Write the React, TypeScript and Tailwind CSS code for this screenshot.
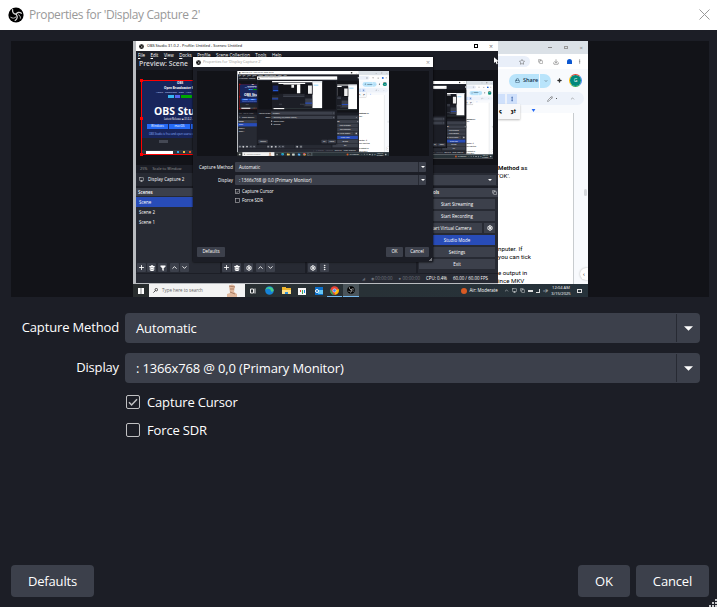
import React from "react";
import {
  Plus, Trash2, Filter, ChevronUp, ChevronDown, Settings, MoreVertical, Monitor,
  Download, Star, Pencil, Sparkle, Lock, Copy,
} from "lucide-react";

function ObsLogo({ className }: { className: string }) {
  return (
    <svg viewBox="0 0 16 16" className={className}>
      <circle cx="8" cy="8" r="7.6" fill="#000" />
      <g fill="none" stroke="#d6d6d6" strokeWidth="1.3" strokeLinecap="round">
        <path d="M4.6 2.7C4.2 5.2 5.6 7 8.1 7.2" />
        <path d="M13.4 6.2C11.2 4.8 9 5.4 8.1 7.2" />
        <path d="M7.2 13.4C9.4 12.2 9.9 9.6 8.1 7.2" />
        <path d="M2.8 10.4C4.6 11.6 6.6 11.4 7.9 10" strokeWidth="0.9" />
        <path d="M12.4 11.2C12.6 9.6 11.8 8.4 10.6 7.8" strokeWidth="0.9" />
      </g>
    </svg>
  );
}

function Arrow({ className }: { className: string }) {
  return (
    <svg viewBox="0 0 10 5" className={className}>
      <path d="M0 0H10L5 5Z" fill="#fff" />
    </svg>
  );
}

function Grip({ className }: { className: string }) {
  return (
    <svg viewBox="0 0 9 9" className={className} fill="#c9cacc">
      <path d="M7 1h2v2H7zM4 4h2v2H4zM7 4h2v2H7zM1 7h2v2H1zM4 7h2v2H4zM7 7h2v2H7z" />
    </svg>
  );
}

function MiniBox({ children, className = "" }: { children?: React.ReactNode; className?: string }) {
  return (
    <span className={`flex h-[9px] w-[9px] shrink-0 items-center justify-center rounded-[1px] bg-[#3c404b] text-white ${className}`}>
      {children}
    </span>
  );
}

function MiniCombo({ label }: { label: string }) {
  return (
    <div className="flex h-[10px] w-[191px] items-center rounded-[1px] bg-[#3c404b] pl-[4px]">
      <span className="flex-1">{label}</span>
      <span className="flex h-full w-[8px] items-center justify-center border-l-[0.5px] border-[#272a33]">
        <Arrow className="h-[2px] w-[4px]" />
      </span>
    </div>
  );
}

/* Smallest level of the mirrored desktop: only blocks of colour are legible. */
function Thumbnail() {
  return (
    <svg viewBox="0 0 455 256" preserveAspectRatio="none" className="h-full w-full">
      <path d="M0 0H455V256H0Z" fill="#1c1e26" />
      <path d="M365 0H455V243H365Z" fill="#fff" />
      <path d="M365 0H455V13H365Z" fill="#dbe1e7" />
      <path d="M376 32H418V46H376Z" fill="#b9e4fb" />
      <path d="M3 0H365V10H3Z" fill="#fff" />
      <path d="M3 29H365V124H3Z" fill="#121318" />
      <path d="M8 40H60V96H8Z" fill="#18255c" />
      <path d="M12 81H60V88H12Z" fill="#2469f5" />
      <path d="M3 147H60V156H3ZM286 158H362V228H286Z" fill="#3c404b" />
      <path d="M3 156H60V166H3ZM286 194H362V204H286Z" fill="#284cb8" />
      <path d="M60 16H300V221H60Z" fill="#1c1e26" />
      <path d="M60 16H300V26H60Z" fill="#fff" />
      <path d="M64 30H296V115H64Z" fill="#121318" />
      <path d="M104 30H225V34H104ZM226 30H256V111H226Z" fill="#fff" />
      <path d="M176 34H200V60H176ZM325 40H360V114H325Z" fill="#eee" />
      <path d="M102 121H293V131H102ZM102 134H293V144H102ZM64 205H92V215H64ZM253 205H270V215H253ZM272 205H296V215H272Z" fill="#3c404b" />
      <path d="M0 243H455V256H0Z" fill="#2b3236" />
      <path d="M16 243H112V256H16Z" fill="#f3f3f3" />
    </svg>
  );
}

function MirrorInDialog({ depth }: { depth: number }) {
  if (depth <= 0) return <Thumbnail />;
  return (
    <div className="h-[256px] w-[455px] origin-top-left scale-[0.334]">
      <Desktop depth={depth - 1} />
    </div>
  );
}

function MirrorInProgram({ depth }: { depth: number }) {
  if (depth <= 0) return <Thumbnail />;
  return (
    <div className="h-[256px] w-[455px] origin-top-left scale-[0.302]">
      <Desktop depth={depth - 1} />
    </div>
  );
}

function MiniDialog({ depth }: { depth: number }) {
  return (
    <div className="absolute left-[60px] top-[16px] flex h-[205px] w-[240px] flex-col bg-[#1c1e26] text-[4.45px] shadow-[0_0_2px_#000]">
      <div className="flex h-[10px] items-center gap-[2px] bg-white px-[3px] text-[3.8px] text-[#999]">
        <ObsLogo className="h-[5px] w-[5px]" />
        <span className="flex-1">Properties for 'Display Capture 2'</span>
        <span className="text-[7px] leading-none">×</span>
      </div>
      <div className="mx-[4px] mt-[4px] h-[85px] overflow-hidden bg-[#121318] pl-[40px]">
        <div className="h-[85px] w-[152px] overflow-hidden">
          <MirrorInDialog depth={depth} />
        </div>
      </div>
      <div className="mt-[6px] flex flex-col gap-[3px]">
        <div className="flex items-center gap-[2px]">
          <span className="w-[40px] text-right">Capture Method</span>
          <MiniCombo label="Automatic" />
        </div>
        <div className="flex items-center gap-[2px]">
          <span className="w-[40px] text-right">Display</span>
          <MiniCombo label=": 1366x768 @ 0,0 (Primary Monitor)" />
        </div>
      </div>
      <div className="ml-[42px] mt-[3px] flex flex-col gap-[3px]">
        <span className="flex h-[6.5px] items-center gap-[2px]">
          <svg viewBox="0 0 14 14" className="h-[5px] w-[5px]" fill="none" stroke="#c1c1c3" strokeWidth="1.6">
            <rect x="1" y="1" width="12" height="12" /><path d="M3 7.3L5.6 10L11 4.2" />
          </svg>
          Capture Cursor
        </span>
        <span className="flex h-[6.5px] items-center gap-[2px]">
          <svg viewBox="0 0 14 14" className="h-[5px] w-[5px]" fill="none" stroke="#c1c1c3" strokeWidth="1.6">
            <rect x="1" y="1" width="12" height="12" />
          </svg>
          Force SDR
        </span>
      </div>
      <div className="mt-auto flex gap-[2px] px-[4px] pb-[5.5px]">
        <span className="flex h-[10px] w-[28px] items-center justify-center rounded-[1px] bg-[#3c404b]">Defaults</span>
        <span className="ml-auto flex h-[10px] w-[17px] items-center justify-center rounded-[1px] bg-[#3c404b]">OK</span>
        <span className="flex h-[10px] w-[24px] items-center justify-center rounded-[1px] bg-[#3c404b]">Cancel</span>
      </div>
      <Grip className="absolute bottom-px right-px h-[3px] w-[3px]" />
    </div>
  );
}

function ScenePreview() {
  return (
    <div className="absolute left-[5px] top-[10px] h-[75px] w-[133px] border border-[#ff0000] bg-[#1c1e26]">
      <div className="flex h-[57px] flex-col items-start whitespace-nowrap bg-[#18255c] pt-px text-white">
        <span className="pl-[35px] text-[3px] font-bold leading-[3.5px]">OBS</span>
        <span className="pl-[22px] text-[3px] font-bold leading-[4px]">Open Broadcaster Software</span>
        <span className="pl-[14px] text-[2.5px] leading-[4px] text-[#c5d5ff]">Home &nbsp; Download &nbsp; Blog &nbsp; Help &nbsp; Forum</span>
        <span className="mt-px flex h-[3px] gap-px pl-[26px]">
          <i className="w-[6px] bg-[#35b7f3]" /><i className="w-[5px] bg-[#5865f2]" /><i className="w-[11px] bg-[#00a800]" />
        </span>
        <span className="mt-[6px] pl-[12px] text-[10.4px] font-bold leading-[14px]">OBS Studio</span>
        <span className="pl-[22px] text-[2.6px] leading-[3px]">Latest Release ■ 31.0.2 - March</span>
        <span className="mt-[3px] flex gap-px pl-[5px] text-[3px] leading-[5px]">
          <span className="w-[21px] bg-[#2469f5] text-center">Windows</span>
          <span className="w-[21px] bg-[#2469f5] text-center">macOS</span>
          <span className="w-[21px] bg-[#2469f5] text-center">Linux</span>
        </span>
        <span className="mt-[4px] pl-[7px] text-[2.6px] leading-[3px] text-[#8eb4ff]">OBS Studio is free and open source software</span>
      </div>
      <div className="flex h-[12px] items-start bg-[#20232c] px-[17px] pt-[2px]">
        <i className="h-[3px] w-[9px] bg-[#444854]" />
      </div>
      <div className="flex h-[4px] items-center gap-[4px] bg-[#30343b] pl-[4px]">
        <i className="h-[3px] w-[27px] bg-white" /><i className="h-[2px] w-[2px] bg-[#39a6e5]" /><i className="h-[2px] w-[2px] bg-[#edc14c]" /><i className="h-[2px] w-[2px] bg-[#e5532c]" />
      </div>
      <i className="absolute -left-[2px] -top-[2px] h-[3px] w-[3px] bg-[#ff0000]" />
      <i className="absolute -left-[2px] top-[36px] h-[3px] w-[3px] bg-[#ff0000]" />
      <i className="absolute -bottom-[2px] -left-[2px] h-[3px] w-[3px] bg-[#ff0000]" />
    </div>
  );
}

function ObsWindow({ depth }: { depth: number }) {
  return (
    <div className="absolute left-[3px] top-0 flex h-[242px] w-[362px] flex-col bg-[#1c1e26] text-[4.45px]">
      <div className="flex h-[10px] shrink-0 items-center gap-[3px] bg-white pl-[3px] pr-[5px] text-[3.85px] text-black">
        <ObsLogo className="h-[5px] w-[5px]" />
        <span>OBS Studio 31.0.2 - Profile: Untitled - Scenes: Untitled</span>
        <i className="ml-auto h-[4px] w-[4px] border border-black" />
        <span className="ml-[8px] text-[7px] leading-none text-[#777]">×</span>
      </div>
      <div className="flex h-[9px] shrink-0 items-center gap-[5.5px] pl-[2px]">
        <span><u>F</u>ile</span><span><u>E</u>dit</span><span><u>V</u>iew</span><span><u>D</u>ocks</span><span><u>P</u>rofile</span>
        <span><u>S</u>cene Collection</span><span><u>T</u>ools</span><span><u>H</u>elp</span>
      </div>
      <div className="flex h-[9px] shrink-0 items-center pl-[3px] text-[6.8px] font-semibold text-[#d5d5d8]">Preview: Scene</div>
      <div className="relative mt-px h-[95px] shrink-0 overflow-hidden bg-[#121318]">
        <ScenePreview />
        <div className="absolute left-[220px] top-[11px] h-[78px] w-[137px] overflow-hidden">
          <MirrorInProgram depth={depth} />
        </div>
      </div>
      <div className="flex h-[8px] shrink-0 items-center gap-[5px] bg-[#1c1e26] pl-[4px] text-[3.8px] text-[#999]">
        <span>25%</span><span>Scale to Window</span><Arrow className="ml-[7px] h-[2px] w-[3px]" />
      </div>
      <div className="flex h-[13px] shrink-0 items-center bg-[#272a33] pl-[3px] pr-[2px]">
        <Monitor className="h-[5px] w-[5px]" />
        <span className="pl-[4px]">Display Capture 2</span>
        <span className="ml-auto flex h-[10px] w-[72px] items-center justify-end bg-[#3c404b] pr-[4px]"><Arrow className="h-[2px] w-[4px]" /></span>
      </div>
      <div className="flex min-h-0 flex-1 gap-[2px] pt-[2px]">
        <div className="flex w-[84px] flex-col bg-[#272a33]">
          <div className="flex h-[8px] items-center bg-[#3c404b] pl-[2px] font-semibold">Scenes</div>
          <div className="mt-[1px] flex h-[10px] items-center bg-[#284cb8] pl-[3px]">Scene</div>
          <div className="flex h-[10px] items-center pl-[3px]">Scene 2</div>
          <div className="flex h-[10px] items-center pl-[3px]">Scene 1</div>
          <div className="mt-auto flex gap-[1px] pb-[1px] pl-px">
            <MiniBox><Plus className="h-[7px] w-[7px]" strokeWidth={3} /></MiniBox>
            <MiniBox><Trash2 className="h-[6px] w-[6px]" strokeWidth={4} /></MiniBox>
            <MiniBox className="ml-px"><Filter className="h-[6px] w-[6px] fill-white" /></MiniBox>
            <MiniBox className="ml-[2px]"><ChevronUp className="h-[7px] w-[7px]" strokeWidth={3} /></MiniBox>
            <MiniBox><ChevronDown className="h-[7px] w-[7px]" strokeWidth={3} /></MiniBox>
          </div>
        </div>
        <div className="flex w-[83px] items-end gap-[1px] bg-[#272a33] pb-[1px]">
          <MiniBox><Plus className="h-[7px] w-[7px]" strokeWidth={3} /></MiniBox>
          <MiniBox><Trash2 className="h-[6px] w-[6px]" strokeWidth={4} /></MiniBox>
          <MiniBox className="ml-[2px]"><Settings className="h-[6px] w-[6px]" strokeWidth={4} /></MiniBox>
          <MiniBox className="ml-[2px]"><ChevronUp className="h-[7px] w-[7px]" strokeWidth={3} /></MiniBox>
          <MiniBox><ChevronDown className="h-[7px] w-[7px]" strokeWidth={3} /></MiniBox>
        </div>
        <div className="flex w-[109px] items-end gap-[3px] bg-[#272a33] pb-[1px] pl-[1px]">
          <MiniBox><Settings className="h-[6px] w-[6px]" strokeWidth={4} /></MiniBox>
          <MiniBox><MoreVertical className="h-[7px] w-[7px]" strokeWidth={3} /></MiniBox>
        </div>
        <div className="flex flex-1 flex-col bg-[#272a33]">
          <div className="flex h-[9px] items-center justify-between bg-[#3c404b] pl-[3px] pr-px font-semibold">
            <span>Controls</span><Copy className="h-[5px] w-[5px]" />
          </div>
          <div className="flex flex-col gap-[2px] pr-[3px] pl-px pt-[1.5px] text-center leading-[10px]">
            <span className="bg-[#3c404b]">Start Streaming</span>
            <span className="bg-[#3c404b]">Start Recording</span>
            <span className="flex gap-[2px]">
              <span className="flex-1 whitespace-nowrap bg-[#3c404b]">Start Virtual Camera</span>
              <span className="flex w-[11px] items-center justify-center bg-[#3c404b]"><Settings className="h-[6px] w-[6px]" strokeWidth={4} /></span>
            </span>
            <span className="bg-[#284cb8]">Studio Mode</span>
            <span className="bg-[#3c404b]">Settings</span>
            <span className="bg-[#3c404b]">Exit</span>
          </div>
        </div>
      </div>
      <div className="flex h-[10px] shrink-0 items-center justify-end gap-[6px] border-t border-[#1c1e26] bg-[#272a33] pr-[10px]">
        <span className="text-[#656973]">◢</span>
        <span className="text-[#737780]">◉ 00:00:00</span>
        <span className="text-[#737780]">● 00:00:00</span>
        <span>CPU: 0.4%</span>
        <span>60.00 / 60.00 FPS</span>
      </div>
    </div>
  );
}

function DocsWindow() {
  return (
    <div className="absolute left-[365px] top-0 flex h-[243px] w-[90px] flex-col bg-[#f8fafd] text-black">
      <div className="flex h-[13px] shrink-0 items-center justify-end gap-[12px] bg-[#dbe1e7] pr-[5px] text-[#777]">
        <i className="h-px w-[4px] bg-[#888]" /><i className="h-[3px] w-[4px] border-[0.5px] border-[#999]" /><span className="text-[6px] leading-none">×</span>
      </div>
      <div className="flex h-[15px] shrink-0 items-center gap-[8px] bg-white text-[#555]">
        <span className="flex h-[11px] w-[32px] items-center justify-end rounded-r-full bg-[#e9eff9] pr-[5px]"><Star className="h-[6px] w-[6px]" /></span>
        <Copy className="h-[5px] w-[5px]" />
        <Download className="ml-[2px] h-[6px] w-[6px]" />
        <i className="h-[5px] w-[5px] rounded-t-full bg-[#0b57d0]" />
        <MoreVertical className="-ml-[3px] h-[5px] w-[5px]" />
      </div>
      <div className="flex h-[23px] shrink-0 items-center pl-[11px]">
        <span className="flex h-[14px] w-[30px] items-center gap-[3px] rounded-l-full bg-[#b9e4fb] pl-[6px] text-[5.5px] font-semibold text-[#12304a]">
          <Lock className="h-[5px] w-[5px]" />Share
        </span>
        <span className="ml-px flex h-[14px] w-[11px] items-center justify-center rounded-r-full bg-[#b9e4fb]"><ChevronDown className="h-[4px] w-[4px]" /></span>
        <Sparkle className="ml-[6px] h-[5px] w-[5px] fill-[#333]" />
        <span className="ml-[7px] flex h-[13px] w-[13px] items-center justify-center rounded-full border border-b-[#34a853] border-l-[#fbbc04] border-r-[#4285f4] border-t-[#ea4335] bg-white">
          <span className="flex h-[11px] w-[11px] items-center justify-center rounded-full bg-[#00897b] text-[5px] text-white">G</span>
        </span>
      </div>
      <div className="flex h-[13px] w-[86px] shrink-0 items-center rounded-r-full bg-[#edf2fa] text-[#555]">
        <i className="h-[10px] w-[7px] bg-[#cfe0fb]" />
        <span className="ml-[2px] flex h-[10px] w-[10px] items-center justify-center bg-[#cfe0fb] text-[#0b3b8c]"><MoreVertical className="h-[6px] w-[6px]" /></span>
        <Pencil className="ml-[30px] h-[6px] w-[6px]" />
        <i className="ml-[3px] h-px w-px bg-[#555]" />
        <ChevronUp className="ml-[13px] h-[5px] w-[5px]" />
      </div>
      <div className="relative h-[8px] shrink-0">
        <span className="absolute -top-px left-0 flex h-[15px] w-[22px] items-center justify-between bg-[#f7f8fa] pl-[1px] pr-[4px] text-[5px] font-semibold shadow-[0_1px_2px_#bbb]"><b>ς</b><b>ȝ†</b></span>
        <svg viewBox="0 0 5 4" className="absolute left-[33px] top-[4px] h-[3px] w-[5px]"><path d="M0 0H5L2.5 4Z" fill="#2469f5" /></svg>
      </div>
      <div className="flex min-h-0 flex-1">
        <div className="w-[76px] overflow-hidden border-r border-[#c8cccf] bg-white text-[6.2px] leading-[8px] whitespace-nowrap [font-family:Roboto,sans-serif]">
          <div className="pt-[51px]"><b className="font-semibold">Method</b> as</div>
          <div>‘OK’.</div>
          <div className="pt-[65px]">nputer. If</div>
          <div>you can tick</div>
          <div className="pt-[8px]">e output in</div>
          <div>ince MKV</div>
        </div>
        <div className="relative flex-1">
          <i className="absolute right-px top-[76px] h-[7px] w-[3px] rounded-full bg-[#d5d8dc]" />
          <span className="absolute bottom-[4px] right-0 flex h-[12px] w-[8px] items-center rounded-l-full bg-white pl-[3px] text-[6px] shadow-[0_0_2px_#aaa]">‹</span>
        </div>
      </div>
    </div>
  );
}

function Taskbar() {
  return (
    <div className="absolute left-0 top-[243px] flex h-[13px] w-[455px] items-center bg-gradient-to-r from-[#292d2e] via-[#283136] to-[#26323a] text-[4.45px]">
      <span className="flex w-[16px] justify-center">
        <svg viewBox="0 0 6 6" className="h-[6px] w-[6px]"><path d="M0 0h2.7v6H0zM3.3 0H6v6H3.3z" fill="#fff" /></svg>
      </span>
      <span className="flex h-[13px] w-[96px] items-center gap-[4px] bg-[#f3f3f3] pl-[4px] text-[#666]">
        <svg viewBox="0 0 6 6" className="h-[5px] w-[5px]" fill="none" stroke="#333"><path d="M0.5 5.5L3 3" /><circle cx="4" cy="2" r="1.5" /></svg>
        Type here to search
        <svg viewBox="0 0 10 13" className="ml-auto mr-[8px] h-[13px] w-[10px]">
          <path d="M2 2Q5 -1 8 2L7 8L10 10V13H0V10L3 9Z" fill="#dfb79c" /><path d="M2 2L8 3M3 5H7M3 8L8 10" stroke="#9c6e55" strokeWidth=".8" />
        </svg>
      </span>
      <span className="ml-[5px] flex items-center text-white">
        <svg viewBox="0 0 6 6" className="h-[6px] w-[6px]" fill="none" stroke="#eee"><path d="M0.5 1h3v4h-3zM5 .5v5" /></svg>
        <svg viewBox="0 0 9 9" className="ml-[9px] h-[9px] w-[9px]"><circle cx="4.5" cy="4.5" r="4.3" fill="#1684d8" /><path d="M.3 4C1 0 8 0 8.7 4.5C7 7 5 5 6 4Q3 1 .3 4Z" fill="#48cf86" /></svg>
        <svg viewBox="0 0 9 7" className="ml-[8px] h-[7px] w-[9px]"><path d="M0 0h4v1h5v6H0z" fill="#efb52d" /><path d="M0 3h9v4H0z" fill="#ffe18a" /><path d="M3 5h3v2H3z" fill="#338fd6" /></svg>
        <svg viewBox="0 0 8 8" className="ml-[7px] h-[8px] w-[8px]"><path d="M0 1h8v7H0z" fill="#f7f7f7" /><path d="M2 3h1v2H2z" fill="#e74835" /><path d="M4 3h1v4H4z" fill="#39a852" /><path d="M6 3h1v3H6z" fill="#1e88e5" /></svg>
        <svg viewBox="0 0 9 8" className="ml-[8px] h-[8px] w-[9px]"><path d="M1 0h8v8H1z" fill="#0d71cc" /><path d="M4 3h5v4H4z" fill="#65c6f5" /><circle cx="3" cy="4" r="1.5" fill="none" stroke="#fff" /></svg>
        <span className="ml-[4px] flex h-[13px] w-[15px] items-center justify-center border-b border-[#76b9ed]">
          <svg viewBox="0 0 9 9" className="h-[9px] w-[9px]"><circle cx="4.5" cy="4.5" r="4.3" fill="#e94335" /><path d="M.5 3L4 9A4.3 4.3 0 0 1 .5 3Z" fill="#34a853" /><path d="M8.6 3A4.3 4.3 0 0 1 4.5 8.8L6 4Z" fill="#fbbc04" /><circle cx="4.5" cy="4.5" r="1.7" fill="#4285f4" stroke="#fff" strokeWidth=".5" /></svg>
        </span>
        <span className="ml-px flex h-[13px] w-[16px] items-center justify-center border-b border-[#76b9ed] bg-[#4b555b]"><ObsLogo className="h-[8px] w-[8px]" /></span>
      </span>
      <span className="ml-auto flex items-center gap-[3px] pr-[6px] text-white">
        <i className="h-[6px] w-[6px] rounded-full bg-[#d75a24]" />
        <span className="mr-[3px] whitespace-nowrap">Air: Moderate</span>
        <ChevronUp className="h-[5px] w-[5px]" /><Monitor className="h-[5px] w-[5px]" /><Copy className="h-[5px] w-[5px]" />
        <i className="h-[2px] w-[5px] bg-[#ddd]" /><i className="h-[4px] w-[4px] border-b border-r border-[#ddd]" /><span>◁»</span>
        <span className="w-[20px] text-center text-[4.1px] leading-[5.5px]">12:04 AM 3/15/2025</span>
        <i className="ml-[3px] h-[4px] w-[5px] border border-[#ddd]" />
      </span>
    </div>
  );
}

function Desktop({ depth }: { depth: number }) {
  return (
    <div className="relative h-[256px] w-[455px] overflow-hidden bg-[#b9bcc0] text-white">
      <DocsWindow />
      <ObsWindow depth={depth} />
      <MiniDialog depth={depth} />
      <Taskbar />
      <svg viewBox="0 0 6 9" className="absolute left-[361px] top-[16px] h-[8px] w-[5px]"><path d="M0 0V7L2 5.5L3 8.5L4.5 8L3.3 5H6Z" fill="#fff" /></svg>
    </div>
  );
}

function Combo({ label }: { label: string }) {
  return (
    <div className="flex h-[30px] w-[575px] items-center rounded-[4px] bg-[#3c404b] pl-[11px]">
      <span className="flex-1 pt-[2px]">{label}</span>
      <span className="flex h-[28px] w-[24px] items-center justify-center border-l border-[#272a33]">
        <Arrow className="h-[5px] w-[9px]" />
      </span>
    </div>
  );
}

function Check({ label, checked }: { label: string; checked?: boolean }) {
  return (
    <label className="flex h-[28px] items-center gap-[7px]">
      <svg viewBox="0 0 14 14" className="h-[14px] w-[14px]" fill="none" stroke="#c1c1c3">
        <rect x="0.5" y="0.5" width="13" height="13" rx="1.5" />
        {checked && <path d="M3 7.3L5.6 10L11 4.2" strokeWidth="1.5" />}
      </svg>
      <span className="pt-[2px]">{label}</span>
    </label>
  );
}

export default function App() {
  return (
    <div className="flex h-[607px] w-[717px] flex-col overflow-hidden bg-[#1c1e26] text-[13px] text-white [font-family:'Open_Sans','Noto_Sans',sans-serif]">
      <header className="flex h-[30px] shrink-0 items-center bg-white pl-[8px] pr-[7px] pb-px text-[12px] tracking-[-0.39px] text-[#999]">
        <ObsLogo className="h-[16px] w-[16px]" />
        <span className="flex-1 pl-[5px] pt-px">Properties for 'Display Capture 2'</span>
        <svg viewBox="0 0 11 11" className="h-[11px] w-[11px]"><path d="M.5 .5L10.5 10.5M10.5 .5L.5 10.5" stroke="#999" fill="none" /></svg>
      </header>
      <section className="mx-[11px] mt-[11px] flex h-[256px] w-[698px] shrink-0 bg-[#121318] pl-[122px]">
        <Desktop depth={1} />
      </section>
      <section className="mt-[16px] flex flex-col gap-[10px] tracking-[-0.15px]">
        <div className="flex items-center">
          <span className="w-[125px] pr-[6px] text-right">Capture Method</span>
          <Combo label="Automatic" />
        </div>
        <div className="flex items-center">
          <span className="w-[125px] pr-[6px] text-right">Display</span>
          <Combo label=": 1366x768 @ 0,0 (Primary Monitor)" />
        </div>
      </section>
      <section className="ml-[126px] mt-[5px] flex flex-col tracking-[-0.15px]">
        <Check label="Capture Cursor" checked />
        <Check label="Force SDR" />
      </section>
      <footer className="relative mt-auto flex gap-[6px] pb-[10px] pl-[11px] pr-[8px]">
        <button className="h-[32px] w-[83px] rounded-[4px] bg-[#3c404b] pt-[2px] tracking-[-0.15px]">Defaults</button>
        <button className="ml-auto h-[32px] w-[52px] rounded-[4px] bg-[#3c404b] pt-[2px] tracking-[-0.15px]">OK</button>
        <button className="h-[32px] w-[73px] rounded-[4px] bg-[#3c404b] pt-[2px] tracking-[-0.15px]">Cancel</button>
        <Grip className="absolute bottom-0 right-0 h-[9px] w-[9px]" />
      </footer>
    </div>
  );
}
